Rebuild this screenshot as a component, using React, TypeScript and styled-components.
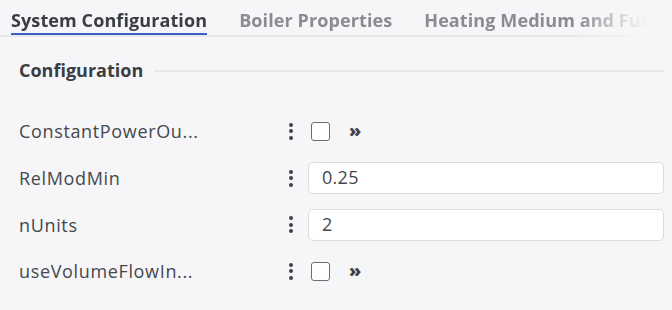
import styled, { createGlobalStyle } from 'styled-components';

const GlobalStyle = createGlobalStyle`
  html, body {
    margin: 0;
    padding: 0;
    background: #f6f6f8;
  }
  body {
    font-family: 'Open Sans', 'Noto Sans', sans-serif;
    color: #3e4146;
  }
`;

const Page = styled.div`
  width: 664px;
  display: flex;
  flex-direction: column;
`;

const TabBar = styled.div`
  display: flex;
  gap: 32px;
  padding-left: 11px;
  height: 37px;
  border-bottom: 2px solid #e8e8ea;
  box-sizing: border-box;
  overflow: hidden;
  white-space: nowrap;
  mask-image: linear-gradient(to right, #000 87%, rgba(0, 0, 0, 0.15) 95%, transparent 98%);
`;

const Tab = styled.div<{ $active?: boolean }>`
  font-size: 18px;
  font-weight: 700;
  line-height: 34px;
  height: 37px;
  box-sizing: border-box;
  color: ${(p) => (p.$active ? '#3a3d42' : '#8b8c8f')};
  border-bottom: 4px solid ${(p) => (p.$active ? '#3d5fc4' : 'transparent')};
  padding-top: 3px;
  flex-shrink: 0;
  letter-spacing: 0.1px;
`;

const Section = styled.div`
  padding: 21px 0 0 19px;
`;

const SectionHeader = styled.div`
  display: flex;
  align-items: center;
  gap: 11px;
  height: 24px;
  font-size: 18px;
  font-weight: 700;
  color: #3a3d42;
  &::after {
    content: '';
    flex: 1;
    height: 2px;
    margin-top: 2px;
    background: #e8e8ea;
  }
`;

const Rows = styled.div`
  display: flex;
  flex-direction: column;
  padding-top: 26px;
`;

const Row = styled.div`
  display: grid;
  grid-template-columns: 263px 26px 1fr;
  align-items: center;
  height: 46.7px;
`;

const Label = styled.div`
  font-size: 18px;
  color: #45484d;
  letter-spacing: 0.65px;
  white-space: nowrap;
  overflow: hidden;
`;

const Kebab = styled.div`
  display: flex;
  flex-direction: column;
  align-items: center;
  gap: 2.5px;
  width: 18px;
  & > span {
    width: 4px;
    height: 4px;
    border-radius: 50%;
    background: #3e4146;
  }
`;

const Value = styled.div`
  display: flex;
  align-items: center;
  gap: 19px;
`;

const Check = styled.div`
  width: 17px;
  height: 17px;
  margin-left: 3px;
  border: 1.5px solid #6b6d71;
  border-radius: 3px;
  background: #fff;
`;

const More = styled.div`
  font-size: 18px;
  font-weight: 800;
  color: #3e4146;
  line-height: 1;
  margin-top: -3px;
`;

const Input = styled.div`
  flex: 1;
  height: 32px;
  box-sizing: border-box;
  border: 1.5px solid #dcdcde;
  border-radius: 5px;
  background: #fff;
  padding-left: 13px;
  font-size: 18px;
  letter-spacing: 0.3px;
  line-height: 29px;
  color: #45484d;
`;

type Field = { name: string; kind: 'bool' | 'text'; value?: string };

const fields: Field[] = [
  { name: 'ConstantPowerOu...', kind: 'bool' },
  { name: 'RelModMin', kind: 'text', value: '0.25' },
  { name: 'nUnits', kind: 'text', value: '2' },
  { name: 'useVolumeFlowIn...', kind: 'bool' },
];

const App = () => (
  <Page>
    <GlobalStyle />
    <TabBar>
      <Tab $active>System Configuration</Tab>
      <Tab>Boiler Properties</Tab>
      <Tab>Heating Medium and Fuel</Tab>
    </TabBar>
    <Section>
      <SectionHeader>Configuration</SectionHeader>
      <Rows>
        {fields.map((f) => (
          <Row key={f.name}>
            <Label>{f.name}</Label>
            <Kebab>
              <span />
              <span />
              <span />
            </Kebab>
            <Value>
              {f.kind === 'bool' ? (
                <>
                  <Check />
                  <More>»</More>
                </>
              ) : (
                <Input>{f.value}</Input>
              )}
            </Value>
          </Row>
        ))}
      </Rows>
    </Section>
  </Page>
);

export default App;
